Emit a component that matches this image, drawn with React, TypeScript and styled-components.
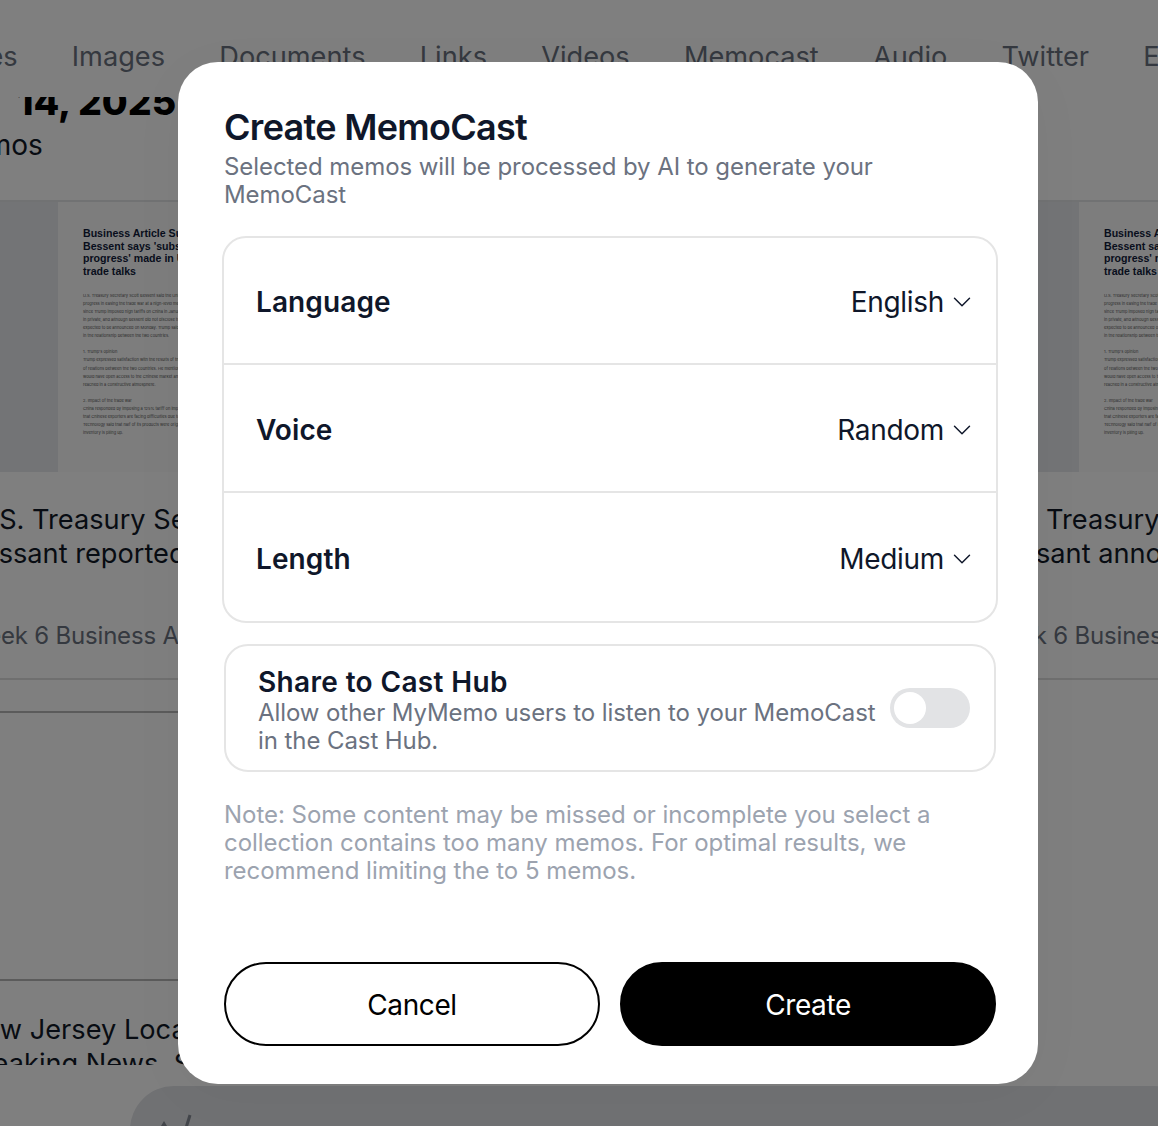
import styled, { createGlobalStyle } from "styled-components";
import { ChevronDown } from "lucide-react";

const GlobalStyle = createGlobalStyle`
  html, body {
    margin: 0;
    padding: 0;
    height: 100%;
    overflow: hidden;
    background: #fff;
    font-family: "Inter", "Liberation Sans", sans-serif;
  }
  * { box-sizing: border-box; }
`;

const Page = styled.div`
  width: 1158px;
  height: 1126px;
  overflow: hidden;
  position: relative;
  background: #fff;
`;

const TabStrip = styled.nav`
  height: 97px;
  padding-top: 40px;
  margin-left: -58px;
  display: flex;
  gap: 54.2px;
  font-size: 27.2px;
  line-height: 34px;
  color: #6b7280;
  white-space: nowrap;
  background: #fff;
  position: relative;
  z-index: 1;
`;

const DateHeading = styled.h2`
  margin: -19px 0 0 17px;
  font-size: 37.5px;
  line-height: 48px;
  font-weight: 800;
  color: #000;
  white-space: nowrap;
`;

const MemoCount = styled.p`
  margin: -1px 0 0 -79px;
  font-size: 28px;
  line-height: 34px;
  color: #111827;
  height: 75px;
  padding-top: 3px;
`;

const CardRow = styled.div`
  display: grid;
  grid-template-columns: repeat(2, 1021px);
  margin-left: -1px;
`;

const Thumb = styled.div`
  height: 272px;
  background: #e6e8ec;
  border-top: 2px solid #e3e4e6;
  padding-left: 59px;
`;

const DocPage = styled.div`
  width: 480px;
  height: 270px;
  background: #fbfbfb;
  padding: 25px 25px;
`;

const DocTitle = styled.div`
  font-family: "Liberation Sans", sans-serif;
  font-size: 10.6px;
  line-height: 12.7px;
  font-weight: 700;
  color: #111c3a;
  margin-bottom: 14px;
`;

const DocText = styled.div`
  font-size: 4px;
  line-height: 8.1px;
  color: #555;
  margin-bottom: 8px;
`;

const CardBody = styled.div`
  height: 208px;
  padding: 31px 0 0 0;
  border-bottom: 2px solid #dedede;
`;

const CardTitle = styled.p<{ $indent: number }>`
  margin: 0 0 0 ${(p) => p.$indent}px;
  font-size: 27.2px;
  line-height: 33.6px;
  color: #111827;
  white-space: nowrap;
`;

const CardMeta = styled.p<{ $indent: number }>`
  margin: 50px 0 0 ${(p) => p.$indent}px;
  font-size: 24px;
  line-height: 32px;
  letter-spacing: -0.2px;
  color: #6b7280;
  white-space: nowrap;
`;

const Divider = styled.div`
  width: 600px;
  height: 2px;
  margin-top: 31px;
  background: #b6b6b6;
`;

const Blank = styled.div`
  width: 600px;
  height: 268px;
  border-bottom: 2px solid #b6b6b6;
`;

const ClippedTitles = styled.div`
  height: 84px;
  overflow: hidden;
  padding-top: 32px;
`;

const BottomBar = styled.div`
  position: absolute;
  left: 130px;
  right: -40px;
  top: 1086px;
  height: 100px;
  background: #e0e2e6;
  border-radius: 44px;
  padding: 26px 0 0 25px;
`;

const Overlay = styled.div`
  position: absolute;
  inset: 0;
  z-index: 5;
  background: rgba(0, 0, 0, 0.5);
  padding: 62px 0 0 178px;
`;

const Modal = styled.section`
  width: 860px;
  height: 1022px;
  background: #fff;
  border-radius: 40px;
  padding: 45px 42px 38px 46px;
  box-shadow: 0 10px 60px rgba(0, 0, 0, 0.03);
  display: flex;
  flex-direction: column;
`;

const Title = styled.h1`
  margin: 0;
  font-size: 36px;
  line-height: 40px;
  font-weight: 600;
  letter-spacing: -0.7px;
  color: #0f172a;
`;

const Subtitle = styled.p`
  margin: 6px 0 0;
  font-size: 24px;
  line-height: 28px;
  letter-spacing: -0.07px;
  color: #6b7280;
  width: 700px;
`;

const OptionsCard = styled.div`
  margin: 27px 0 0 -2px;
  width: 776px;
  height: 387px;
  border: 2px solid #e5e5e5;
  border-radius: 24px;
  display: grid;
  grid-template-rows: 125px 128px 1fr;
`;

const OptionRow = styled.div`
  display: flex;
  align-items: center;
  justify-content: space-between;
  padding: 2px 19px 0 32px;
  & + & {
    border-top: 2px solid #e5e5e5;
    padding-top: 4px;
  }
`;

const OptionLabel = styled.span`
  font-size: 28px;
  font-weight: 600;
  letter-spacing: 0.1px;
  color: #0f172a;
`;

const OptionValue = styled.span`
  display: flex;
  align-items: center;
  gap: 3px;
  font-size: 28px;
  letter-spacing: -0.3px;
  color: #0f172a;
`;

const ShareBox = styled.div`
  margin-top: 21px;
  width: 772px;
  height: 128px;
  border: 2px solid #e5e5e5;
  border-radius: 24px;
  padding: 19px 24px 0 32px;
  display: flex;
  align-items: center;
  gap: 10px;
`;

const ShareText = styled.div`
  flex: 1;
  align-self: flex-start;
`;

const ShareTitle = styled.div`
  font-size: 28px;
  line-height: 34px;
  font-weight: 600;
  letter-spacing: 0.35px;
  color: #0f172a;
`;

const ShareDesc = styled.div`
  font-size: 24px;
  line-height: 28px;
  letter-spacing: -0.08px;
  color: #6b7280;
`;

const Toggle = styled.div`
  width: 80px;
  height: 40px;
  flex: none;
  margin-top: -19px;
  border-radius: 20px;
  background: #e2e3e5;
  padding: 4px;
`;

const Knob = styled.div`
  width: 32px;
  height: 32px;
  border-radius: 50%;
  background: #fff;
`;

const Note = styled.p`
  margin: 29px 0 0;
  font-size: 24px;
  line-height: 28px;
  letter-spacing: -0.03px;
  color: #9ca3af;
  width: 740px;
`;

const Actions = styled.div`
  margin-top: auto;
  width: 772px;
  display: grid;
  grid-template-columns: 1fr 1fr;
  gap: 20px;
`;

const Button = styled.button<{ $primary?: boolean }>`
  height: 84px;
  padding-top: 2px;
  border-radius: 42px;
  border: 2px solid #000;
  background: ${(p) => (p.$primary ? "#000" : "#fff")};
  color: ${(p) => (p.$primary ? "#fff" : "#000")};
  font-family: inherit;
  font-size: 28px;
  font-weight: 400;
  letter-spacing: -0.4px;
`;

const options = [
  { label: "Language", value: "English" },
  { label: "Voice", value: "Random" },
  { label: "Length", value: "Medium" },
];

const tabs = ["Notes", "Images", "Documents", "Links", "Videos", "Memocast", "Audio", "Twitter", "Everything"];

const Doc = () => (
  <DocPage>
    <DocTitle>
      Business Article Summary:
      <br />
      Bessent says 'substantial
      <br />
      progress' made in US-China
      <br />
      trade talks
    </DocTitle>
    <DocText>
      U.S. Treasury Secretary Scott Bessent said the United States made
      <br />
      progress in easing the trade war at a high-level meeting this weekend
      <br />
      since Trump imposed high tariffs on China in January. The two sides met
      <br />
      in private, and although Bessent did not disclose the specifics, it is
      <br />
      expected to be announced on Monday. Trump said he is confident
      <br />
      in the relationship between the two countries.
    </DocText>
    <DocText>
      1. Trump's opinion
      <br />
      Trump expressed satisfaction with the results of the negotiations
      <br />
      of relations between the two countries. He mentioned that the US
      <br />
      would have open access to the Chinese market and said it was
      <br />
      reached in a constructive atmosphere.
    </DocText>
    <DocText>
      2. Impact of the trade war
      <br />
      China responded by imposing a 125% tariff on imports from the US
      <br />
      that Chinese exporters are facing difficulties due to US tariffs.
      <br />
      Technology said that half of its products were originally sold in
      <br />
      inventory is piling up.
    </DocText>
  </DocPage>
);

export default function App() {
  return (
    <Page>
      <GlobalStyle />
      <TabStrip>
        {tabs.map((t) => (
          <span key={t}>{t}</span>
        ))}
      </TabStrip>
      <DateHeading>14, 2025</DateHeading>
      <MemoCount>2 memos</MemoCount>
      <CardRow>
        <div>
          <Thumb>
            <Doc />
          </Thumb>
          <CardBody>
            <CardTitle $indent={-27}>U.S. Treasury Secretary</CardTitle>
            <CardTitle $indent={-34}>Bessant reported progress</CardTitle>
            <CardMeta $indent={-34}>Week 6 Business Article</CardMeta>
          </CardBody>
        </div>
        <div>
          <Thumb>
            <Doc />
          </Thumb>
          <CardBody>
            <CardTitle $indent={26}>Treasury</CardTitle>
            <CardTitle $indent={-32}>Bessant announced</CardTitle>
            <CardMeta $indent={-36}>Week 6 Business</CardMeta>
          </CardBody>
        </div>
      </CardRow>
      <Divider />
      <Blank />
      <ClippedTitles>
        <CardTitle $indent={-36}>New Jersey Local</CardTitle>
        <CardTitle $indent={-35}>Breaking News, Sports</CardTitle>
      </ClippedTitles>
      <BottomBar>
        <svg width="50" height="20" viewBox="0 0 50 20" fill="none">
          <path d="M9 9 L6 14 L12 14 Z" fill="#858a94" />
          <path d="M35 3 L31 16" stroke="#858a94" strokeWidth="3" />
        </svg>
      </BottomBar>
      <Overlay>
        <Modal>
          <Title>Create MemoCast</Title>
          <Subtitle>Selected memos will be processed by AI to generate your MemoCast</Subtitle>
          <OptionsCard>
            {options.map((o) => (
              <OptionRow key={o.label}>
                <OptionLabel>{o.label}</OptionLabel>
                <OptionValue>
                  {o.value}
                  <ChevronDown size={30} strokeWidth={1.15} />
                </OptionValue>
              </OptionRow>
            ))}
          </OptionsCard>
          <ShareBox>
            <ShareText>
              <ShareTitle>Share to Cast Hub</ShareTitle>
              <ShareDesc>Allow other MyMemo users to listen to your MemoCast in the Cast Hub.</ShareDesc>
            </ShareText>
            <Toggle>
              <Knob />
            </Toggle>
          </ShareBox>
          <Note>
            Note: Some content may be missed or incomplete you select a collection contains too many memos. For
            optimal results, we recommend limiting the to 5 memos.
          </Note>
          <Actions>
            <Button>Cancel</Button>
            <Button $primary>Create</Button>
          </Actions>
        </Modal>
      </Overlay>
    </Page>
  );
}
